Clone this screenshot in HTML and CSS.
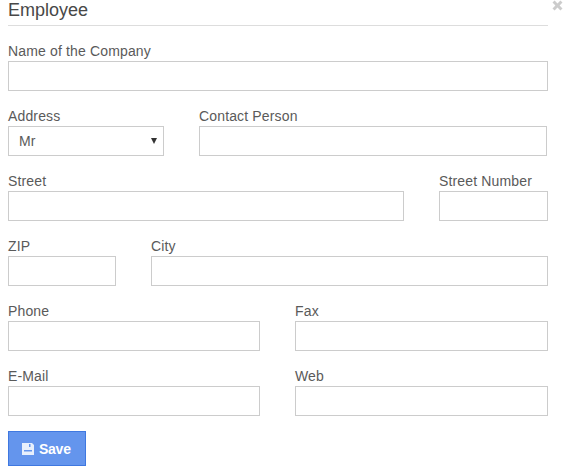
FILE: index.html
```html
<!DOCTYPE html>
<html lang="en">
<head>
    <meta charset="UTF-8">
    <title>Employee</title>
    <link rel="stylesheet" href="styles.css">
</head>
<body>
    <button class="close" type="button" aria-label="Close">
        <svg width="11" height="11" viewBox="0 0 11 11"><path d="M2.6 0.5 5.5 3.4 8.4 0.5 10.5 2.6 7.6 5.5 10.5 8.4 8.4 10.5 5.5 7.6 2.6 10.5 0.5 8.4 3.4 5.5 0.5 2.6Z"/></svg>
    </button>
    <div class="content">
        <h1>Employee</h1>
        <form>
            <div class="row">
                <div class="field grow">
                    <label>Name of the Company</label>
                    <input type="text">
                </div>
            </div>
            <div class="row">
                <div class="field w-156">
                    <label>Address</label>
                    <div class="select-box">
                        <select>
                            <option>Mr</option>
                            <option>Mrs</option>
                        </select>
                        <span class="arrow"></span>
                    </div>
                </div>
                <div class="field grow trim">
                    <label>Contact Person</label>
                    <input type="text">
                </div>
            </div>
            <div class="row">
                <div class="field grow">
                    <label>Street</label>
                    <input type="text">
                </div>
                <div class="field w-109">
                    <label>Street Number</label>
                    <input type="text">
                </div>
            </div>
            <div class="row">
                <div class="field w-108">
                    <label>ZIP</label>
                    <input type="text">
                </div>
                <div class="field grow">
                    <label>City</label>
                    <input type="text">
                </div>
            </div>
            <div class="row">
                <div class="field w-252">
                    <label>Phone</label>
                    <input type="text">
                </div>
                <div class="field grow">
                    <label>Fax</label>
                    <input type="text">
                </div>
            </div>
            <div class="row">
                <div class="field w-252">
                    <label>E-Mail</label>
                    <input type="text">
                </div>
                <div class="field grow">
                    <label>Web</label>
                    <input type="text">
                </div>
            </div>
            <button class="btn-save" type="button">
                <svg width="12" height="12" viewBox="0 0 12 12"><path fill-rule="evenodd" d="M0 0H10L12 2V12H0ZM7 1V4H8.5V1ZM2 7V8.5H10V7Z"/></svg>
                Save
            </button>
        </form>
    </div>
</body>
</html>
```
FILE: styles.css
```css
html, body {
    margin: 0;
    background-color: #ffffff;
}
body {
    position: relative;
    height: 470px;
    overflow: hidden;
    font-family: "Liberation Sans", Arial, sans-serif;
    font-size: 14px;
    color: #5a5a5a;
}
.content {
    width: 540px;
    margin-left: 8px;
}
h1 {
    margin: 0 0 15px;
    height: 25px;
    font-size: 18px;
    font-weight: normal;
    line-height: 20px;
    color: #484848;
    border-bottom: 1px solid #dddddd;
}
.close {
    position: absolute;
    top: 0;
    left: 552px;
    padding: 0;
    border: none;
    background: none;
    line-height: 0;
}
.close svg {
    fill: #cccccc;
}
.row {
    display: flex;
    gap: 35px;
    margin-bottom: 15px;
}
.field {
    min-width: 0;
}
.grow {
    flex: 1;
}
.trim {
    margin-right: 1px;
}
.w-108 {
    width: 108px;
}
.w-109 {
    width: 109px;
}
.w-156 {
    width: 156px;
}
.w-252 {
    width: 252px;
}
label {
    display: block;
    height: 20px;
    line-height: 20px;
    letter-spacing: 0.15px;
}
input, select {
    display: block;
    box-sizing: border-box;
    width: 100%;
    height: 30px;
    margin: 0;
    border: 1px solid #cccccc;
    border-radius: 0;
    background: #ffffff;
    font-family: inherit;
    font-size: 14px;
    color: #5a5a5a;
}
select {
    padding: 0 10px;
    appearance: none;
}
.select-box {
    position: relative;
}
.arrow {
    position: absolute;
    top: 12px;
    right: 7px;
    border-left: 3px solid transparent;
    border-right: 3px solid transparent;
    border-top: 6px solid #333333;
}
.btn-save {
    display: flex;
    align-items: center;
    gap: 5px;
    box-sizing: border-box;
    width: 78px;
    height: 35px;
    padding: 0 0 0 13px;
    border: 1px solid #3f78e0;
    background-color: #6495ed;
    font-family: inherit;
    font-size: 14px;
    font-weight: bold;
    letter-spacing: -0.25px;
    color: #ffffff;
}
.btn-save svg {
    fill: #ffffff;
    opacity: 0.85;
}
```
